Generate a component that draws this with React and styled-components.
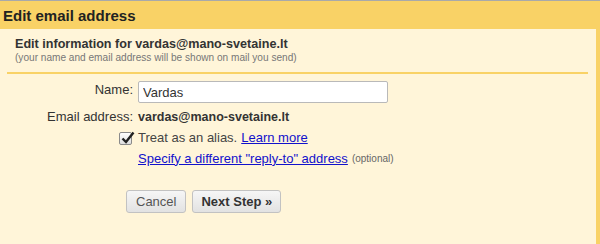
import React from "react";
import styled, { createGlobalStyle } from "styled-components";

const Global = createGlobalStyle`
  html, body { margin: 0; padding: 0; background: #fff5d9; }
  body { font-family: "Liberation Sans", Arial, sans-serif; }
`;

const Page = styled.div`
  width: 600px;
  height: 244px;
  border-top: 1px solid #a9a9a9;
  background: #f9d266;
  box-sizing: border-box;
  display: flex;
  flex-direction: column;
  overflow: hidden;
`;

const TitleBar = styled.div`
  height: 28px;
  padding-left: 3px;
  display: flex;
  align-items: center;
  font-size: 15px;
  font-weight: bold;
  color: #222;
`;

const Panel = styled.div`
  flex: 1;
  margin-right: 4px;
  background: #fff5d9;
  padding: 8px 8px 0 7px;
`;

const Section = styled.div`
  padding: 0 0 8px 8px;
  border-bottom: 2px solid #f9d266;
`;

const Heading = styled.div`
  font-size: 12.6px;
  font-weight: bold;
  color: #333;
  line-height: 15px;
`;

const Sub = styled.div`
  font-size: 10.1px;
  color: #777;
  line-height: 12px;
`;

const Form = styled.div`
  display: grid;
  grid-template-columns: 126px auto;
  column-gap: 5px;
  align-items: center;
  margin-top: 7px;
  font-size: 13px;
  color: #333;
`;

const Label = styled.div`
  align-self: ${(p) => (p.$top ? "start" : "center")};
  padding-top: ${(p) => (p.$top ? "1px" : "0")};
  line-height: 16px;
  height: ${(p) => p.$h || "auto"};
  display: flex;
  justify-content: flex-end;
  align-items: ${(p) => (p.$top ? "flex-start" : "center")};
`;

const Field = styled.div`
  display: flex;
  align-items: ${(p) => (p.$top ? "flex-start" : "center")};
  height: ${(p) => p.$h || "auto"};
  gap: 4px;
`;

const Input = styled.input`
  width: 250px;
  height: 22px;
  box-sizing: border-box;
  border: 1px solid #b9b9b9;
  border-radius: 2px;
  background: #fff;
  font: 13px "Liberation Sans", Arial, sans-serif;
  color: #333;
  padding: 0 4px;
  outline: none;
`;

const Value = styled.span`
  font-weight: bold;
  font-size: 12.5px;
  color: #333;
`;

const Muted = styled.span`
  color: #444;
`;

const Link = styled.a`
  color: #1111cc;
  text-decoration: underline;
  cursor: pointer;
`;

const Small = styled.span`
  font-size: 10px;
  color: #666;
`;

const Box = styled.span`
  width: 13px;
  height: 13px;
  box-sizing: border-box;
  border: 1px solid #8a8a8a;
  border-radius: 2px;
  background: linear-gradient(#ffffff, #dedede);
  position: relative;
  display: inline-block;
  margin-right: 1px;
  margin-top: 2px;
`;

const Check = styled.svg`
  position: absolute;
  left: 0px;
  top: -3px;
`;

const Buttons = styled.div`
  display: flex;
  gap: 6px;
  margin: 24px 0 0 119px;
`;

const Button = styled.button`
  height: 23px;
  padding: 0 ${(p) => p.$pad || "10px"};
  border: 1px solid #c2c2c2;
  border-radius: 3px;
  background: linear-gradient(#f6f6f6, #e2e2e2);
  font: ${(p) => (p.$bold ? "bold" : "normal")} 13px "Liberation Sans", Arial, sans-serif;
  color: ${(p) => (p.$bold ? "#333" : "#555")};
  cursor: pointer;
`;

export default function App() {
  return (
    <>
      <Global />
      <Page>
        <TitleBar>Edit email address</TitleBar>
        <Panel>
          <Section>
            <Heading>Edit information for vardas@mano-svetaine.lt</Heading>
            <Sub>(your name and email address will be shown on mail you send)</Sub>
          </Section>
          <Form>
            <Label $top>Name:</Label>
            <Field $top $h="28px">
              <Input defaultValue="Vardas" />
            </Field>
            <Label $h="16px">Email address:</Label>
            <Field $h="16px">
              <Value>vardas@mano-svetaine.lt</Value>
            </Field>
            <Label $h="25px">
              <Box>
                <Check width="16" height="16" viewBox="0 0 16 16">
                  <path d="M2.5 8.5 L6 12 L13.5 2.5" fill="none" stroke="#222" strokeWidth="2.4" />
                </Check>
              </Box>
            </Label>
            <Field $h="25px">
              <Muted>Treat as an alias.</Muted>
              <Link>Learn more</Link>
            </Field>
            <div />
            <Field $h="16px">
              <Link>Specify a different "reply-to" address</Link>
              <Small>(optional)</Small>
            </Field>
          </Form>
          <Buttons>
            <Button $pad="9px">Cancel</Button>
            <Button $bold $pad="8px">Next Step »</Button>
          </Buttons>
        </Panel>
      </Page>
    </>
  );
}
